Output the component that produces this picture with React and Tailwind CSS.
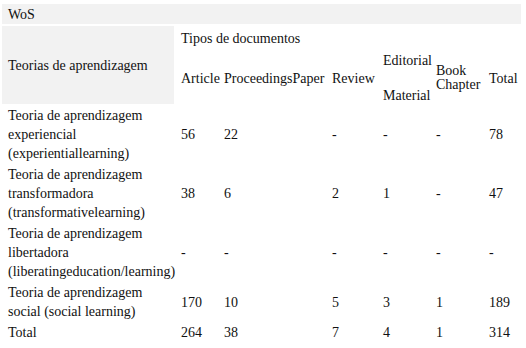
const rows = [
  {
    label: ["Teoria de aprendizagem", "experiencial", "(experientiallearning)"],
    values: ["56", "22", "-", "-", "-", "78"],
  },
  {
    label: ["Teoria de aprendizagem", "transformadora", "(transformativelearning)"],
    values: ["38", "6", "2", "1", "-", "47"],
  },
  {
    label: ["Teoria de aprendizagem", "libertadora", "(liberatingeducation/learning)"],
    values: ["-", "-", "-", "-", "-", "-"],
  },
  {
    label: ["Teoria de aprendizagem", "social (social learning)"],
    values: ["170", "10", "5", "3", "1", "189"],
  },
  {
    label: ["Total"],
    values: ["264", "38", "7", "4", "1", "314"],
  },
];

const widths = [172, 41, 106, 49, 51, 51, 37];

export default function App() {
  return (
    <div className="w-[526px] h-[348px] bg-white pt-[2px] text-[14px] leading-[19px] text-[#111] font-serif">
      <table className="table-fixed border-separate border-spacing-[2px] w-[523px] font-[Liberation_Serif]">
        <colgroup>
          {widths.map((w, i) => (
            <col key={i} style={{ width: w }} />
          ))}
        </colgroup>
        <tbody>
          <tr>
            <td colSpan={7} className="bg-[#f2f2f2] h-[20px] px-[6px] p-0 align-middle">
              WoS
            </td>
          </tr>
          <tr>
            <td rowSpan={2} className="bg-[#f2f2f2] px-[6px] p-0 align-middle">
              Teorias de aprendizagem
            </td>
            <td colSpan={6} className="h-[24px] px-[5px] p-0 align-middle">
              Tipos de documentos
            </td>
          </tr>
          <tr className="h-[52px]">
            <td className="px-[5px] p-0 align-middle">Article</td>
            <td className="px-[5px] p-0 align-middle">ProceedingsPaper</td>
            <td className="px-[5px] p-0 align-middle">Review</td>
            <td className="px-[5px] p-0 align-middle">
              <div className="flex flex-col justify-between h-[52px] pt-[1px] leading-[16px]">
                <span>Editorial</span>
                <span>Material</span>
              </div>
            </td>
            <td className="px-[5px] p-0 align-middle leading-[14px]">
              Book
              <br />
              Chapter
            </td>
            <td className="px-[5px] p-0 align-middle">Total</td>
          </tr>
          {rows.map((row, i) => (
            <tr key={i}>
              <td className="px-[6px] p-0 align-middle whitespace-nowrap">
                {row.label.map((l, j) => (
                  <div key={j}>{l}</div>
                ))}
              </td>
              {row.values.map((v, j) => (
                <td key={j} className="px-[5px] p-0 align-middle">
                  {v}
                </td>
              ))}
            </tr>
          ))}
        </tbody>
      </table>
    </div>
  );
}
